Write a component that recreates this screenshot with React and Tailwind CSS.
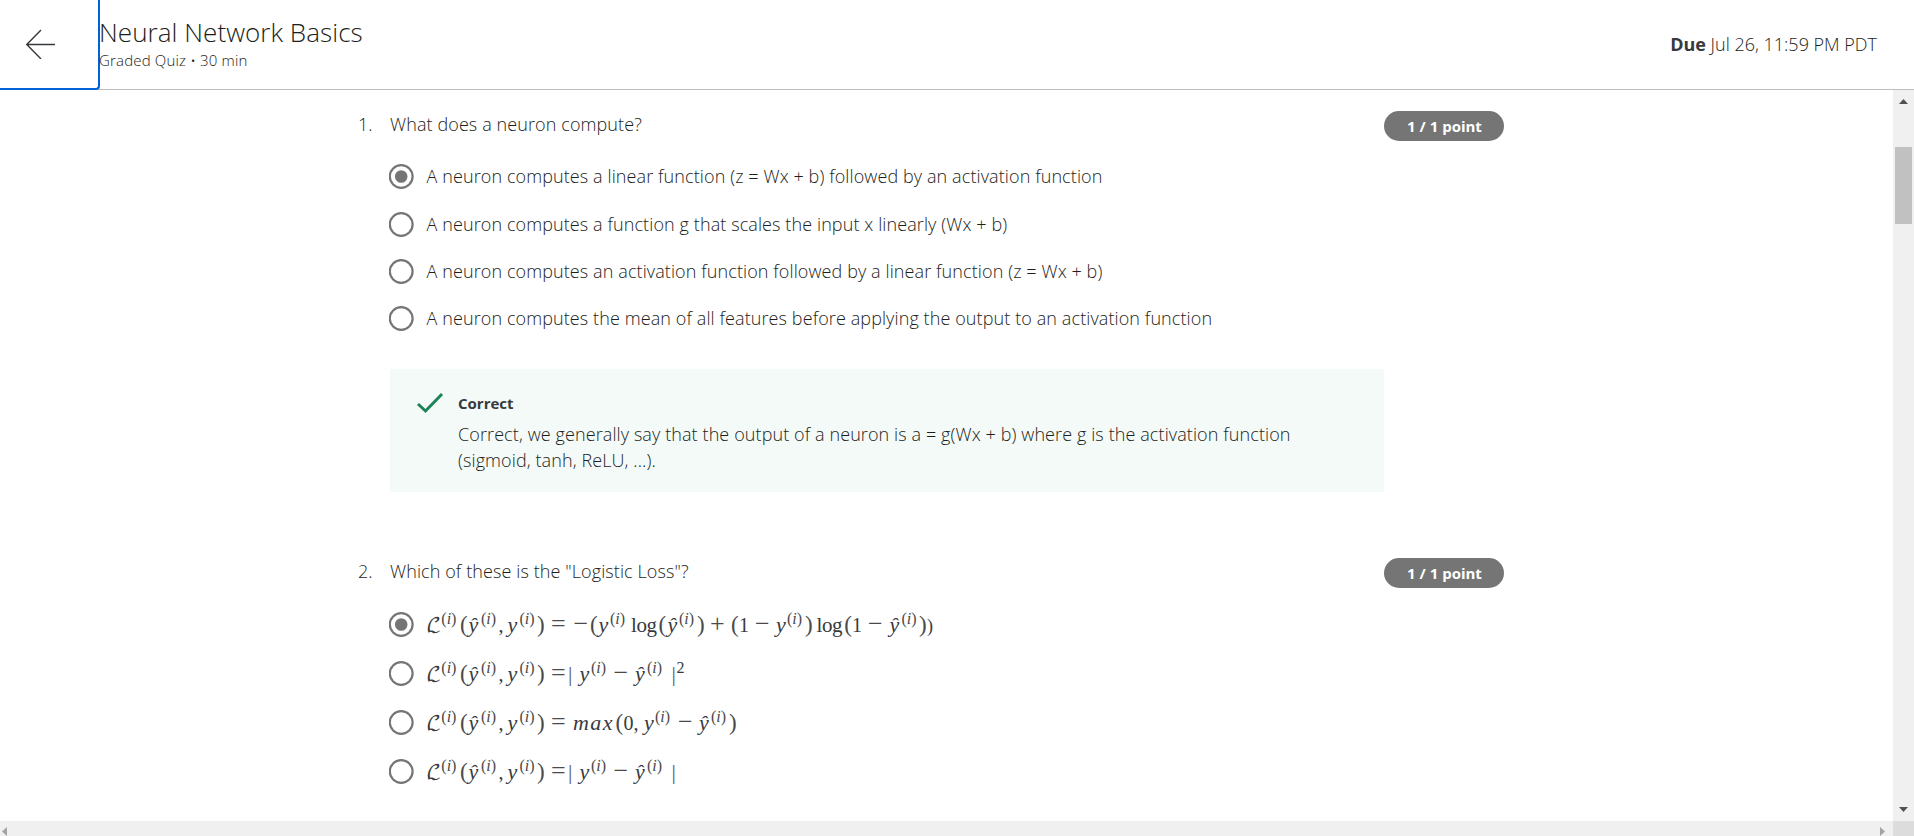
import React from 'react';

const KIND = {
  v: 'text-[22px] italic',
  n: 'text-[20px]',
  w: 'text-[22px] italic tracking-[1.4px]',
  o: 'text-[21px] tracking-[-0.4px]',
  p: 'text-[23px] text-[#4a4a4a]',
  q: 'text-[18px]',
  e: 'text-[26px] text-[#4a4a4a]',
  L: 'text-[20px] font-["DejaVu_Math_TeX_Gyre","DejaVu_Serif",serif]',
  b: 'text-[22px] text-[#5a5a5a]',
};

const HEAD = [
  ['L', 'ℒ', 426], ['s', '(i)', 441.3], ['p', '(', 460], ['v', 'ŷ', 468.5], ['s', '(i)', 481],
  ['n', ',', 498.5], ['v', 'y', 507.5], ['s', '(i)', 519.5], ['p', ')', 537], ['e', '=', 551],
];

const ABS = [
  ...HEAD, ['b', '|', 568], ['v', 'y', 579.5], ['s', '(i)', 591], ['e', '−', 613.5],
  ['v', 'ŷ', 635], ['s', '(i)', 647], ['b', '|', 671.5],
];

const FORMULAS = [
  [
    ...HEAD, ['e', '−', 573.5], ['p', '(', 590], ['v', 'y', 598.5], ['s', '(i)', 610], ['o', 'log', 631],
    ['p', '(', 658.5], ['v', 'ŷ', 667.5], ['s', '(i)', 679], ['p', ')', 697], ['e', '+', 710],
    ['p', '(', 731], ['n', '1', 739], ['e', '−', 755], ['v', 'y', 776], ['s', '(i)', 787],
    ['p', ')', 805], ['o', 'log', 816.5], ['p', '(', 844.3], ['n', '1', 852], ['e', '−', 868],
    ['v', 'ŷ', 889.5], ['s', '(i)', 901.5], ['p', ')', 919], ['q', ')', 927],
  ],
  [...ABS, ['t', '2', 676.5]],
  [
    ...HEAD, ['w', 'max', 573], ['p', '(', 615.5], ['n', '0', 623.5], ['n', ',', 633.5], ['v', 'y', 644],
    ['s', '(i)', 655], ['e', '−', 678], ['v', 'ŷ', 699], ['s', '(i)', 711], ['p', ')', 729],
  ],
  ABS,
];

function Sup({ children }) {
  if (children === '2') return <span className="relative -top-[8px] text-[16px]">2</span>;
  return (
    <span className="relative -top-[8px] text-[16px] text-[#4a4a4a]">
      (<i>i</i>)
    </span>
  );
}

function Formula({ tokens }) {
  return (
    <span className="-mt-[2px] flex h-6 items-baseline font-['Liberation_Serif',serif] leading-6 font-normal tracking-normal text-[#373a3c]">
      {tokens.map(([kind, text, x], i) => {
        const next = tokens[i + 1];
        return (
          <span
            key={i}
            className={'block shrink-0 whitespace-nowrap ' + (KIND[kind] || '')}
            style={{ width: (next ? next[2] : x + 12) - x }}
          >
            {kind === 's' || kind === 't' ? <Sup>{text}</Sup> : text}
          </span>
        );
      })}
    </span>
  );
}

function Radio({ checked }) {
  return (
    <svg className="mr-[12px] size-[25px] shrink-0" viewBox="0 0 25 25">
      <circle cx="12.2" cy="12.5" r="11.4" fill="none" stroke="#757575" strokeWidth="2.2" />
      {checked && <circle cx="12.2" cy="12.5" r="6.3" fill="#757575" />}
    </svg>
  );
}

function Question({ number, title, children }) {
  return (
    <section className="flex items-start">
      <div className="-ml-px w-[32px] leading-[26px]">{number}.</div>
      <div className="w-[994px] tracking-[0.1px]">
        <h2 className="leading-[26px]">{title}</h2>
        {children}
      </div>
      <div className="flex h-[30px] w-[120px] items-center justify-center rounded-full bg-[#757575] pl-px text-[15px] font-bold text-white">
        1 / 1 point
      </div>
    </section>
  );
}

const ANSWERS = [
  'A neuron computes a linear function (z = Wx + b) followed by an activation function',
  'A neuron computes a function g that scales the input x linearly (Wx + b)',
  'A neuron computes an activation function followed by a linear function (z = Wx + b)',
  'A neuron computes the mean of all features before applying the output to an activation function',
];

export default function App() {
  return (
    <div className="flex h-[836px] w-[1914px] flex-col overflow-hidden bg-white font-['Open_Sans',sans-serif] text-[18px] font-light text-[#1c1e20]">
      <header className="flex h-[90px] shrink-0 border-b border-[#bdbdbd]">
        <button className="-mb-px flex h-[90px] w-[100px] shrink-0 items-center rounded-br-[4px] border-r-2 border-b-2 border-[#0062d6] pl-[26px]">
          <svg className="size-[30px]" viewBox="0 0 30 30" fill="none" stroke="#373a3c" strokeWidth="1.4">
            <path d="M29 15.5H1M15 1L0.8 15.5L15 30" />
          </svg>
        </button>
        <div className="-ml-px flex-1 pt-[15px]">
          <h1 className="text-[26px] leading-[34px] tracking-[0.05px]">Neural Network Basics</h1>
          <p className="pt-px text-[15px] leading-[21px] tracking-[0.17px]">Graded Quiz • 30 min</p>
        </div>
        <p className="self-center pr-[37px]">
          <b className="font-bold text-[#373a3c]">Due</b> Jul 26, 11:59 PM PDT
        </p>
      </header>

      <div className="flex h-[731px] shrink-0">
        <main className="flex-1 overflow-hidden pt-[21px] pl-[359px]">
          <div className="h-[447px]">
            <Question number={1} title="What does a neuron compute?">
              <ul className="-ml-[1px] pt-[16px]">
                {ANSWERS.map((text, i) => (
                  <li key={text} className="flex h-[47.4px] items-center">
                    <Radio checked={i === 0} />
                    <span className="pl-[0.5px]">{text}</span>
                  </li>
                ))}
              </ul>
              <div className="mt-[26px] flex h-[123px] bg-[#f4faf8] pt-[21px] pl-[26px]">
                <svg className="mt-[2px] mr-[14px] h-[22px] w-[28px]" viewBox="0 0 28 22" fill="none" stroke="#1d8459" strokeWidth="3">
                  <path d="M2 12L9.5 19L26 2" />
                </svg>
                <div>
                  <p className="text-[15px] leading-[26px] font-bold tracking-normal text-[#373a3c]">Correct</p>
                  <p className="mt-[5px] w-[880px] leading-[26px]">
                    Correct, we generally say that the output of a neuron is a = g(Wx + b) where g is the activation function
                    <br />
                    (sigmoid, tanh, ReLU, ...).
                  </p>
                </div>
              </div>
            </Question>
          </div>
          <Question number={2} title={'Which of these is the "Logistic Loss"?'}>
            <ul className="-ml-[1px] pt-[16px]">
              {FORMULAS.map((tokens, i) => (
                <li key={i} className="flex h-[49px] items-center">
                  <Radio checked={i === 0} />
                  <Formula tokens={tokens} />
                </li>
              ))}
            </ul>
          </Question>
        </main>
        <aside className="flex w-[21px] flex-col items-center bg-[#f0f0f0] pt-[9px] pb-[9px]">
          <svg className="h-[5px] w-[9px]" viewBox="0 0 9 5">
            <path d="M4.5 0L9 5H0Z" fill="#505050" />
          </svg>
          <div className="mt-[43px] h-[77px] w-[17px] bg-[#c1c1c1]" />
          <svg className="mt-auto h-[5px] w-[9px]" viewBox="0 0 9 5">
            <path d="M0 0H9L4.5 5Z" fill="#505050" />
          </svg>
        </aside>
      </div>

      <div className="flex h-[15px] shrink-0 bg-[#f0f0f0]">
        <div className="flex flex-1 justify-between pt-[6px] pr-[8px] pl-[2px]">
          <svg className="h-[9px] w-[5px]" viewBox="0 0 5 9">
            <path d="M5 0V9L0 4.5Z" fill="#a3a3a3" />
          </svg>
          <svg className="h-[9px] w-[5px]" viewBox="0 0 5 9">
            <path d="M0 0V9L5 4.5Z" fill="#a3a3a3" />
          </svg>
        </div>
        <div className="w-[21px] bg-[#dcdcdc]" />
      </div>
    </div>
  );
}
